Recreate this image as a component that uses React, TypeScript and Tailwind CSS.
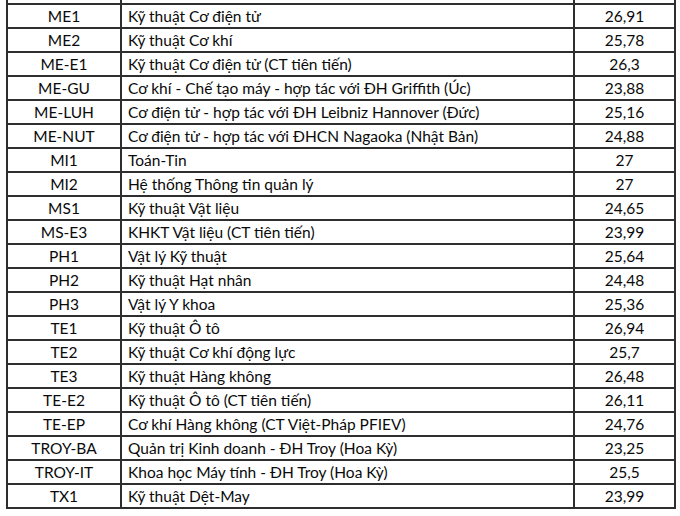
import React from 'react';

const rows: [string, string, string][] = [
  ['ME1', 'Kỹ thuật Cơ điện tử', '26,91'],
  ['ME2', 'Kỹ thuật Cơ khí', '25,78'],
  ['ME-E1', 'Kỹ thuật Cơ điện tử (CT tiên tiến)', '26,3'],
  ['ME-GU', 'Cơ khí - Chế tạo máy - hợp tác với ĐH Griffith (Úc)', '23,88'],
  ['ME-LUH', 'Cơ điện tử - hợp tác với ĐH Leibniz Hannover (Đức)', '25,16'],
  ['ME-NUT', 'Cơ điện tử - hợp tác với ĐHCN Nagaoka (Nhật Bản)', '24,88'],
  ['MI1', 'Toán-Tin', '27'],
  ['MI2', 'Hệ thống Thông tin quản lý', '27'],
  ['MS1', 'Kỹ thuật Vật liệu', '24,65'],
  ['MS-E3', 'KHKT Vật liệu (CT tiên tiến)', '23,99'],
  ['PH1', 'Vật lý Kỹ thuật', '25,64'],
  ['PH2', 'Kỹ thuật Hạt nhân', '24,48'],
  ['PH3', 'Vật lý Y khoa', '25,36'],
  ['TE1', 'Kỹ thuật Ô tô', '26,94'],
  ['TE2', 'Kỹ thuật Cơ khí động lực', '25,7'],
  ['TE3', 'Kỹ thuật Hàng không', '26,48'],
  ['TE-E2', 'Kỹ thuật Ô tô (CT tiên tiến)', '26,11'],
  ['TE-EP', 'Cơ khí Hàng không (CT Việt-Pháp PFIEV)', '24,76'],
  ['TROY-BA', 'Quản trị Kinh doanh - ĐH Troy (Hoa Kỳ)', '23,25'],
  ['TROY-IT', 'Khoa học Máy tính - ĐH Troy (Hoa Kỳ)', '25,5'],
  ['TX1', 'Kỹ thuật Dệt-May', '23,99'],
];

const App: React.FC = () => {
  return (
    <div className="w-[680px] h-[516px] overflow-hidden bg-white pl-[6px] font-['Lato',sans-serif] text-[15.5px] text-[#0a0a0a]">
      <table className="table-fixed border-collapse w-[668px]">
        <colgroup>
          <col className="w-[114px]" />
          <col className="w-[453px]" />
          <col className="w-[101px]" />
        </colgroup>
        <tbody>
          <tr className="h-[4px]">
            <td className="border-x-2 border-b-2 border-[#2e2e2e] p-0" />
            <td className="border-x-2 border-b-2 border-[#2e2e2e] p-0" />
            <td className="border-x-2 border-b-2 border-[#2e2e2e] p-0" />
          </tr>
          {rows.map(([code, name, score]) => (
            <tr key={code} className="h-[24px]">
              <td className="border-2 border-[#2e2e2e] p-0 text-center leading-[20px]">{code}</td>
              <td className="border-2 border-[#2e2e2e] py-0 px-[6px] text-left leading-[20px] whitespace-nowrap">{name}</td>
              <td className="border-2 border-[#2e2e2e] p-0 text-center leading-[20px]">{score}</td>
            </tr>
          ))}
        </tbody>
      </table>
    </div>
  );
};

export default App;
